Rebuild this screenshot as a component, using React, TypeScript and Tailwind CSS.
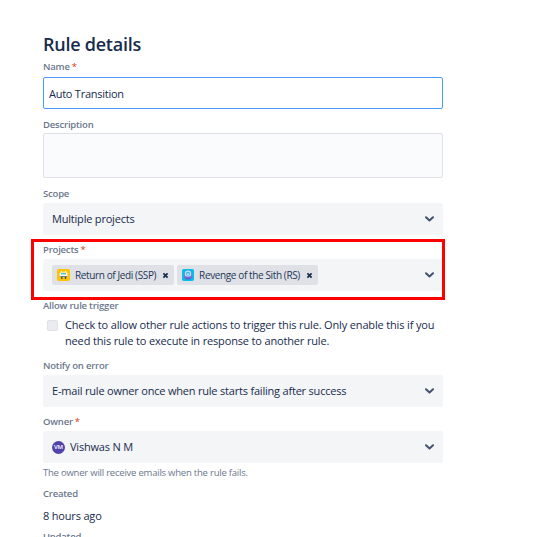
import { ReactNode } from "react";

type LabelProps = {
  children: ReactNode;
  required?: boolean;
};

const Label = ({ children, required }: LabelProps) => {
  return (
    <div className="flex h-4 items-start text-[9.5px] leading-[14px] font-semibold tracking-[-0.2px] whitespace-nowrap text-[#6b778c]">
      {children}
      {required && <span className="ml-[2px] font-normal text-[#de350b]">*</span>}
    </div>
  );
};

const Chevron = () => {
  return (
    <svg className="ml-auto h-[7px] w-[11px] shrink-0" viewBox="0 0 11 7" fill="none">
      <path d="M2 1.2 5.5 4.5 9 1.2" stroke="#42526e" strokeWidth="2" strokeLinecap="round" strokeLinejoin="round" />
    </svg>
  );
};

const Select = ({ children }: { children: ReactNode }) => {
  return (
    <div className="flex h-8 items-center rounded-[3px] bg-[#f4f5f7] pr-2 pl-[9px] text-[11px] tracking-[-0.2px] whitespace-nowrap text-[#172b4d]">
      {children}
      <Chevron />
    </div>
  );
};

type TagProps = {
  icon: ReactNode;
  children: ReactNode;
};

const Tag = ({ icon, children }: TagProps) => {
  return (
    <div className="flex h-5 items-center rounded-[2px] bg-[#dfe1e6] pr-[5px] pl-[5px] text-[10px] tracking-[-0.38px] text-[#253858]">
      {icon}
      <span className="ml-[5px]">{children}</span>
      <svg className="ml-[6px] h-[7px] w-[7px]" viewBox="0 0 7 7">
        <path d="M1.4 1.4 5.6 5.6M5.6 1.4 1.4 5.6" stroke="#172b4d" strokeWidth="1.7" />
      </svg>
    </div>
  );
};

const JediIcon = () => {
  return (
    <svg className="h-3 w-[13px]" viewBox="0 0 13 12">
      <rect width="13" height="12" rx="1.8" fill="#ffc400" />
      <path d="M4 2h1.2v1.6H4zM8 2h1.2v1.6H8z" fill="#fff" />
      <rect x="2.6" y="3.4" width="7.8" height="4.6" rx="1" fill="#fff" />
      <path d="M4 4h5v1.5H4z" fill="#4cc3d9" />
      <path d="M3.2 7h6.8v1H3.2z" fill="#6b778c" />
      <path d="M4 8h1.4v2H4zM7.8 8h1.4v2H7.8z" fill="#42526e" />
    </svg>
  );
};

const SithIcon = () => {
  return (
    <svg className="h-3 w-3" viewBox="0 0 12 12">
      <rect width="12" height="12" rx="1.8" fill="#00c0e8" />
      <path d="M2 9.4V5.2a4 4 0 0 1 8 0v4.2z" fill="#8777d9" />
      <circle cx="6" cy="4.8" r="3.2" fill="#b3e5f5" />
      <circle cx="6" cy="4.8" r="2" fill="#35b5dc" />
      <circle cx="6" cy="5.2" r="1" fill="#d5f0fa" />
      <path d="M1.8 7.6h8.4v1.6H1.8z" fill="#7b68d4" />
      <path d="M3.4 9.2h5.2v1.2H3.4z" fill="#6554c0" />
    </svg>
  );
};

const App = () => {
  return (
    <div className="h-[537px] overflow-hidden bg-white pt-[33px] pl-[43px] font-['Open_Sans',sans-serif] text-[#172b4d]">
      <div className="w-[400px]">
        <h1 className="mb-[5px] h-[22px] text-[18px] leading-[22px] font-semibold tracking-[-0.25px]">Rule details</h1>

        <Label required>Name</Label>
        <div className="mt-px flex h-8 items-center rounded-[2px] border border-[#4c9aff] px-[5px] pt-[2px] text-[11px] tracking-[-0.25px]">
          Auto Transition
        </div>

        <div className="mt-[9px]">
          <Label>Description</Label>
        </div>
        <div className="-mt-px h-[45px] rounded-[2px] border border-[#dfe1e6] bg-[#fafbfc]" />

        <div className="mt-[9px]">
          <Label>Scope</Label>
          <Select>Multiple projects</Select>
        </div>

        <div className="relative mt-2">
          <Label required>Projects</Label>
          <Select>
            <div className="flex gap-[3px]">
              <Tag icon={<JediIcon />}>Return of Jedi (SSP)</Tag>
              <Tag icon={<SithIcon />}>Revenge of the Sith (RS)</Tag>
            </div>
          </Select>
          <div className="absolute -top-1 -left-3 h-[61px] w-[414px] border-[3px] border-[#ff0000]" />
        </div>

        <div className="mt-2">
          <Label>Allow rule trigger</Label>
          <div className="flex h-11 pt-[2px] pl-1">
            <div className="mt-[3px] h-[11px] w-[11px] shrink-0 rounded-[2px] border border-[#dfe1e6] bg-[#ebecf0]" />
            <p className="ml-[7px] text-[11px] leading-4 tracking-[-0.155px] whitespace-nowrap">
              Check to allow other rule actions to trigger this rule. Only enable this if you
              <br />
              need this rule to execute in response to another rule.
            </p>
          </div>
        </div>

        <Label>Notify on error</Label>
        <Select>E-mail rule owner once when rule starts failing after success</Select>

        <div className="mt-2">
          <Label required>Owner</Label>
          <Select>
            <span className="flex h-[13px] w-[13px] items-center justify-center rounded-full bg-[#5243aa] text-[6px] font-semibold text-white">
              VM
            </span>
            <span className="ml-[5px]">Vishwas N M</span>
          </Select>
        </div>
        <p className="mt-[3px] text-[9.5px] leading-[14px] tracking-[-0.22px] whitespace-nowrap text-[#6b778c]">
          The owner will receive emails when the rule fails.
        </p>

        <div className="mt-[7px]">
          <Label>Created</Label>
        </div>
        <p className="mt-[5px] mb-[6px] text-[11px] leading-4 tracking-[-0.18px]">8 hours ago</p>
        <Label>Updated</Label>
      </div>
    </div>
  );
};

export default App;
